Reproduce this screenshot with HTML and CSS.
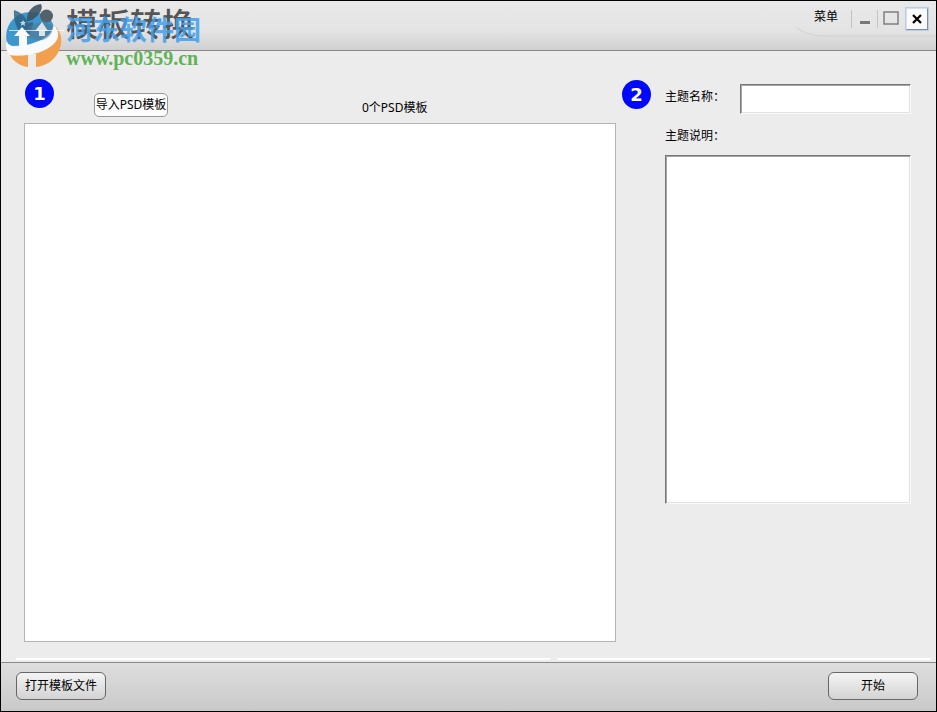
FILE: index.html
```html
<!DOCTYPE html>
<html lang="zh-CN">
<head>
  <meta charset="UTF-8">
  <title>模板转换</title>
  <link rel="stylesheet" href="styles.css">
</head>
<body>
  <div class="window">
    <header class="titlebar">
      <h1 class="app-title">模板转换</h1>
      <svg class="curve" viewBox="0 0 140 18" aria-hidden="true">
        <path d="M0 2 C10 10 20 11 36 11 H140" fill="none" stroke="#d2d2d2"/>
      </svg>
      <nav class="controls">
        <button type="button" class="menu-btn">菜单</button>
        <button type="button" class="win-btn" aria-label="最小化">
          <svg width="12" height="14" viewBox="0 0 12 14"><path d="M1 10h10v3H1z" fill="#777"/></svg>
        </button>
        <button type="button" class="win-btn" aria-label="最大化">
          <svg width="16" height="14" viewBox="0 0 16 14"><path d="M1 1h14v12H1z" fill="none" stroke="#808080" stroke-width="1.500"/></svg>
        </button>
        <button type="button" class="close-btn" aria-label="关闭">
          <svg width="12" height="12" viewBox="0 0 12 12"><path d="M2 2l8 8M10 2l-8 8" stroke="#000" stroke-width="2.200"/></svg>
        </button>
      </nav>
    </header>

    <div class="brand">
      <svg class="brand-logo" width="62" height="66" viewBox="4 4 62 66" aria-hidden="true">
        <!-- blue upper half -->
        <path d="M7 43 C3 27 14 12 31 12 C42 12 50 17 53 24 C56 32 48 38 39 41 L27 45 L12 46z" fill="#3c97cd"/>
        <!-- orange crescent and base -->
        <path d="M53 24 C61 30 63 40 60 48 C56 60 46 66 36 67 V54 H28 V67 C20 66 14 62 10 55 C32 57 52 47 57 36 C58 32 56 27 53 24z" fill="#f2a04e"/>
        <!-- white swoosh between the halves -->
        <path d="M7 41 C8 46 13 47 20 46 C34 45 51 38 54 25 C61 33 59 41 50 47 C40 54 24 57 10 55 C6 52 5 46 7 41z" fill="#f8fafb"/>
        <!-- rabbit ears and face -->
        <path d="M14 10 C21 12 26 17 28 23 L33 22 C33 31 30 36 23 37 C18 31 13 22 14 10z" fill="#2c5f80" fill-opacity=".8"/>
        <path d="M41 4 C43 8 41 12 37 16 C34 19 31 21 27 21 C26 14 31 5 41 4z" fill="#3d5362" fill-opacity=".9"/>
        <circle cx="46.500" cy="16" r="6.500" fill="#52616a"/>
        <path d="M28 28 C32 22 47 20 52 26 C54 32 49 38 43 40 C37 41 30 39 27 36z" fill="#55758a" fill-opacity=".55"/>
        <!-- arrows -->
        <path d="M22 27 L30 36 H27 V48 H19 V36 H14z" fill="#f8fafb"/>
        <path d="M42 22 L48 31 H45 V36 H39 V31 H35z" fill="#dbe3e8"/>
        <path d="M23 20 L24 22 L26 22 L24.500 23.500 L25 26 L23 24.500 L21 26 L21.500 23.500 L20 22 H22z" fill="#b9dcf0"/>
        <path d="M9 30.500 H64" stroke="#fff" stroke-opacity=".7"/>
      </svg>
      <div class="brand-text">
        <span class="brand-name">河东软件园</span>
        <span class="brand-url">www.pc0359.cn</span>
      </div>
    </div>

    <main class="content">
      <section class="import-panel">
        <div class="import-bar">
          <span class="step">1</span>
          <button type="button" class="import-btn">导入PSD模板</button>
          <span class="count">0个PSD模板</span>
        </div>
        <div class="file-list"></div>
      </section>

      <section class="theme-panel">
        <span class="step">2</span>
        <form class="theme-form">
          <div class="field-row">
            <label for="theme-name">主题名称：</label>
            <input type="text" id="theme-name" class="sunken">
          </div>
          <label for="theme-desc" class="desc-label">主题说明：</label>
          <textarea id="theme-desc" class="sunken theme-desc"></textarea>
        </form>
      </section>
    </main>

    <div class="rules"><span></span><span></span></div>

    <footer class="footer">
      <button type="button" class="action-btn">打开模板文件</button>
      <button type="button" class="action-btn">开始</button>
    </footer>
  </div>
</body>
</html>
```

FILE: styles.css
```css
* {
  box-sizing: border-box;
}

body {
  margin: 0;
  font-family: "Noto Sans", "Noto Sans CJK SC", sans-serif;
  font-size: 12px;
  line-height: 18px;
  color: #000;
}

button {
  padding: 0;
  font: inherit;
  color: inherit;
  white-space: nowrap;
}

.window {
  position: relative;
  display: flex;
  flex-direction: column;
  min-height: 100vh;
  border: 1px solid #000;
  background: #ececec;
}

/* title bar */
.titlebar {
  position: relative;
  display: flex;
  justify-content: space-between;
  align-items: flex-start;
  height: 50px;
  padding: 0 8px 0 65px;
  border-bottom: 1px solid #888;
  background: linear-gradient(#e9e9e9, #e4e4e4 60%, #d0d0d0);
}

.app-title {
  margin: 3px 0 0;
  font-size: 32px;
  font-weight: 500;
  line-height: 40px;
  color: #555;
}

.curve {
  position: absolute;
  right: 0;
  top: 24px;
  width: 140px;
  height: 18px;
}

.controls {
  position: relative;
  display: flex;
  align-items: center;
  padding-top: 7px;
}

.menu-btn,
.win-btn {
  border: 0;
  background: none;
}

.menu-btn {
  width: 50px;
  height: 22px;
  padding-bottom: 4px;
}

.win-btn {
  display: flex;
  justify-content: center;
  align-items: center;
  width: 26px;
  height: 18px;
  padding-bottom: 2px;
  border-left: 1px solid #c4c4c4;
}

.close-btn {
  display: flex;
  justify-content: center;
  align-items: center;
  width: 22px;
  height: 22px;
  margin-left: 3px;
  border: 1px solid #7d8fa8;
  border-top-color: #d5e0ee;
  border-left-color: #d5e0ee;
  background: #fafafa;
  box-shadow: 0 0 0 1px #b9cde6;
}

/* site mark laid over the title bar */
.brand {
  position: absolute;
  left: 3px;
  top: 3px;
  display: flex;
  pointer-events: none;
}

.brand-text {
  display: flex;
  flex-direction: column;
  padding-top: 8px;
}

.brand-name {
  font-size: 27px;
  font-weight: 700;
  line-height: 36px;
  color: #40a0ee;
  opacity: 0.85;
}

.brand-url {
  font-family: "Liberation Serif", serif;
  font-size: 20px;
  font-weight: 700;
  line-height: 20px;
  color: #62b257;
}

/* body */
.content {
  display: grid;
  grid-template-columns: 1fr 289px;
  gap: 6px;
  flex: 1;
  padding: 28px 25px 16px 23px;
}

.step {
  flex: none;
  width: 29px;
  height: 29px;
  border-radius: 50%;
  background: #0008fa;
  color: #fff;
  font-family: "DejaVu Sans", sans-serif;
  font-size: 18px;
  font-weight: 700;
  line-height: 29px;
  text-align: center;
}

.import-panel {
  display: flex;
  flex-direction: column;
}

.import-bar {
  display: grid;
  grid-template-columns: 69px 1fr 254px;
  height: 44px;
  padding-left: 1px;
}

.import-btn {
  justify-self: start;
  width: 74px;
  height: 24px;
  margin-top: 14px;
  border: 1px solid #999;
  border-radius: 5px;
  background: #fdfdfd;
}

.count {
  margin-top: 20px;
}

.file-list {
  flex: 1;
  border: 1px solid #b4b4b4;
  background: #fff;
}

.theme-panel {
  display: flex;
  gap: 14px;
  padding-top: 1px;
}

.theme-form {
  display: flex;
  flex: 1;
  flex-direction: column;
  padding-top: 4px;
}

.field-row {
  display: grid;
  grid-template-columns: 75px 1fr;
  align-items: center;
}

.field-row label {
  padding-bottom: 4px;
}

.sunken {
  width: 100%;
  height: 30px;
  padding: 2px 4px;
  border: 1px solid;
  border-color: #777 #fafafa #fafafa #777;
  background: #fff;
  box-shadow: inset 1px 1px #a5a5a5, inset -1px -1px #e2e2e2;
  font: inherit;
  outline: none;
}

.desc-label {
  margin: 13px 0 10px;
}

.theme-desc {
  height: 349px;
  resize: none;
}

.rules {
  display: grid;
  grid-template-columns: 534fr 374fr;
  gap: 7px;
  padding: 0 5px 2px 15px;
}

.rules span {
  height: 2px;
  background: #fff;
}

/* bottom bar */
.footer {
  display: flex;
  justify-content: space-between;
  padding: 9px 18px 11px 15px;
  border-top: 1px solid #8a8a8a;
  background: linear-gradient(#dedede, #c9c9c9);
}

.action-btn {
  width: 90px;
  height: 28px;
  border: 1px solid #666;
  border-radius: 6px;
  background: linear-gradient(#f4f4f4, #d3d3d3);
}
```
